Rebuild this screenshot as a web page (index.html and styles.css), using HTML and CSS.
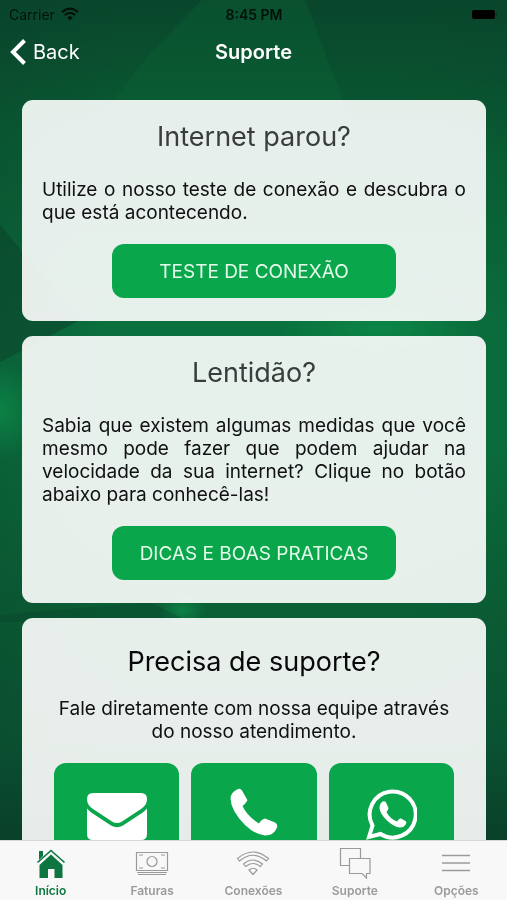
FILE: index.html
```html
<!DOCTYPE html>
<html lang="pt-BR">
<head>
<meta charset="utf-8">
<meta name="viewport" content="width=device-width, initial-scale=1">
<title>Suporte</title>
<link rel="stylesheet" href="styles.css">
</head>
<body>
<svg class="backdrop" viewBox="0 0 507 900" preserveAspectRatio="none" aria-hidden="true">
  <defs>
    <linearGradient id="edge" x1="0" x2="1" y1="0" y2="0">
      <stop offset="0" stop-color="#0a432c" stop-opacity=".35"/>
      <stop offset=".25" stop-color="#0a432c" stop-opacity="0"/>
      <stop offset=".8" stop-color="#0a432c" stop-opacity="0"/>
      <stop offset="1" stop-color="#0a432c" stop-opacity=".15"/>
    </linearGradient>
    <linearGradient id="base" x1="0" x2="0" y1="0" y2="1">
      <stop offset="0" stop-color="#09502f"/>
      <stop offset=".12" stop-color="#095c33"/>
      <stop offset=".36" stop-color="#0a713e"/>
      <stop offset=".5" stop-color="#0a713e"/>
      <stop offset=".68" stop-color="#0a5f35"/>
      <stop offset=".82" stop-color="#0a5533"/>
      <stop offset=".93" stop-color="#09402a"/>
    </linearGradient>
    <linearGradient id="facet" x1="0" x2="0" y1="0" y2="1">
      <stop offset="0" stop-color="#09402a" stop-opacity=".6"/>
      <stop offset="1" stop-color="#09402a" stop-opacity="0"/>
    </linearGradient>
    <radialGradient id="glow">
      <stop offset="0" stop-color="#0c8a49" stop-opacity=".8"/>
      <stop offset="1" stop-color="#0c8a49" stop-opacity="0"/>
    </radialGradient>
  </defs>
  <rect width="507" height="900" fill="url(#base)"/>
  <rect width="507" height="900" fill="url(#edge)"/>
  <path d="M0 0H202L150 54L90 130H0Z" fill="url(#facet)"/>
  <path d="M305 0H507V160H365Z" fill="url(#facet)"/>
  <path d="M0 225L80 320L0 362Z" fill="#09402a" opacity=".5"/>
  <ellipse cx="380" cy="328" rx="100" ry="30" fill="url(#glow)"/>
  <ellipse cx="0" cy="410" rx="40" ry="50" fill="url(#glow)"/>
  <ellipse cx="182" cy="610" rx="24" ry="16" fill="url(#glow)"/>
  <path d="M0 615L150 602L190 622H0Z" fill="#09402a" opacity=".3"/>
</svg>
<header class="top">
  <div class="status">
    <span class="carrier">Carrier
      <svg width="18" height="14" viewBox="0 0 18 14" aria-hidden="true"><g fill="none" stroke="#000" stroke-width="2.3"><path d="M1 5.2Q9-2 17 5.2"/><path d="M3.8 8.2Q9 3.6 14.2 8.2"/></g><path d="M6.2 10.4Q9 8 11.8 10.4L9 13.4Z"/></svg>
    </span>
    <span class="clock">8:45 PM</span>
    <svg class="battery" width="28" height="11" viewBox="0 0 28 11" aria-hidden="true"><rect x="1" y="1" width="23" height="9" rx="2"/><path d="M25.500 3.500q1.500 2 0 4z" opacity=".5"/></svg>
  </div>
  <nav class="navbar">
    <a class="back" href="#"><svg width="17" height="26" viewBox="0 0 17 26" aria-hidden="true"><path d="M14.500 1.500L3 13L14.500 24.500" fill="none" stroke="#fff" stroke-width="4"/></svg>Back</a>
    <h1>Suporte</h1>
  </nav>
</header>
<main>
  <section class="card">
    <h2>Internet parou?</h2>
    <p>Utilize o nosso teste de conexão e descubra o que está acontecendo.</p>
    <button class="action" type="button">TESTE DE CONEXÃO</button>
  </section>
  <section class="card">
    <h2>Lentidão?</h2>
    <p>Sabia que existem algumas medidas que você mesmo pode fazer que podem ajudar na velocidade da sua internet? Clique no botão abaixo para conhecê-las!</p>
    <button class="action" type="button">DICAS E BOAS PRATICAS</button>
  </section>
  <section class="card contact">
    <h2>Precisa de suporte?</h2>
    <p>Fale diretamente com nossa equipe através do nosso atendimento.</p>
    <div class="tiles">
      <button type="button" aria-label="E-mail"><svg width="60" height="52" viewBox="0 -5 60 52" aria-hidden="true"><g fill="#fff"><path d="M6 0H54Q60 0 60 6Q60 12 54 16L35 28.500Q30 31.500 25 28.500L6 16Q0 12 0 6Q0 0 6 0Z"/><path d="M0 15.500Q2 18 5 20L24 32.500Q30 36 36 32.500L55 20Q58 18 60 15.500V41Q60 47 54 47H6Q0 47 0 41Z"/></g></svg></button>
      <button type="button" aria-label="Telefone"><svg width="48" height="48" viewBox="0 0 48 48" aria-hidden="true"><path fill="#fff" d="M7.500 1.200Q10.500 0 12 2.500L17.500 12.300Q15.500 16 12.500 18Q17 28 29 35.500Q31 31.500 35 30.500L45 34.500Q48 36 47 39.500Q44 47.500 35 47.500Q25 46.500 15 37Q1 23 .5 10.500Q1 4 7.500 1.200Z"/></svg></button>
      <button type="button" aria-label="WhatsApp"><svg width="52" height="52" viewBox="0 0 52 52" aria-hidden="true"><path d="M4 49L7.500 37.500A23 23 0 1 1 15.500 46Z" fill="none" stroke="#fff" stroke-width="4"/><path fill="#fff" d="M17.500 13.500Q20 12.500 21 14.500L23.500 20Q23 22.500 21.500 24Q24.500 30.500 32 33.500Q33.500 31 35.500 30.300L40.500 33Q42 34 41 36Q38.500 40 34.500 39.500Q28 38.500 21.500 32Q15 25.500 14.500 20Q14.500 15.500 17.500 13.500Z"/></svg></button>
    </div>
  </section>
</main>
<nav class="tabs" aria-label="Principal">
  <a class="active" href="#"><svg width="30" height="32" viewBox="0 0 30 32" aria-hidden="true"><path fill="currentColor" d="M3 4H7V9L3 13ZM15 7.500L26.500 18V31H18.500V22H12V31H3.500V18Z"/><path fill="none" stroke="currentColor" stroke-width="1.600" d="M1.500 15.500L15 3.500L28.500 15.500"/></svg>Início</a>
  <a href="#"><svg width="34" height="32" viewBox="0 0 34 32" aria-hidden="true"><g fill="none" stroke="currentColor" stroke-width="1.200"><path d="M1.500 5.500H32.500V23.500H1.500ZM2 25.500H32M3 27.500H31"/><circle cx="17" cy="14.500" r="5"/><path d="M4 8H8M26 8H30M4 21H8M26 21H30"/></g></svg>Faturas</a>
  <a href="#"><svg width="34" height="32" viewBox="0 0 34 32" aria-hidden="true"><g fill="none" stroke="currentColor" stroke-width="1.200" stroke-linejoin="round"><path d="M1.500 11.500Q17-1.500 32.500 11.500L30.500 14Q17 2.500 3.500 14Z"/><path d="M7.500 17Q17 9 26.500 17L24.500 19.500Q17 13.500 9.500 19.500Z"/><path d="M13 23Q17 19.500 21 23L17 27.500Z"/></g></svg>Conexões</a>
  <a href="#"><svg width="32" height="32" viewBox="0 0 32 32" aria-hidden="true"><path fill="none" stroke="currentColor" stroke-width="1.200" d="M21.500 11V1.500H1.500V18.500H10.500M10.500 11.500H31V26.500H27.500V31L23 26.500H10.500Z"/></svg>Suporte</a>
  <a href="#"><svg width="28" height="32" viewBox="0 0 28 32" aria-hidden="true"><path fill="none" stroke="currentColor" stroke-width="1.300" d="M0 8.500H28M0 16H28M0 23.500H28"/></svg>Opções</a>
</nav>
</body>
</html>
```
FILE: styles.css
```css
* { box-sizing: border-box; }
body {
  margin: 0;
  height: 100vh;
  display: flex;
  flex-direction: column;
  overflow: hidden;
  font-family: Inter, "Liberation Sans", sans-serif;
  color: #111;
  background: #09492f;
}
.backdrop {
  position: fixed;
  inset: 0;
  width: 100%;
  height: 100%;
  z-index: -1;
}
.status, .navbar {
  display: grid;
  grid-template-columns: 1fr auto 1fr;
  align-items: center;
}
.status {
  height: 28px;
  padding: 0 8px 0 9px;
  font-size: 14px;
  color: #000;
}
.carrier { display: flex; align-items: center; gap: 6px; opacity: .75; }
.clock { font-weight: 600; opacity: .8; }
.battery { justify-self: end; }
.navbar {
  height: 48px;
  padding: 0 10px;
  color: #fff;
}
.back {
  display: flex;
  align-items: center;
  gap: 6px;
  color: #fff;
  font-size: 20px;
  text-decoration: none;
}
h1 { margin: 0; font-size: 20px; font-weight: 600; }
main {
  flex: 1;
  min-height: 0;
  overflow: hidden;
  padding: 24px 21px 0 22px;
}
.card {
  display: flex;
  flex-direction: column;
  align-items: center;
  margin-bottom: 15px;
  padding: 20px 20px 23px;
  border-radius: 11px;
  background: rgba(255, 255, 255, .9);
}
h2 {
  margin: 0 0 24px;
  font-size: 27px;
  line-height: 34px;
  font-weight: 400;
  color: #3a3d3c;
}
p {
  margin: 0 0 20px;
  width: 100%;
  font-size: 19px;
  line-height: 23px;
  text-align: justify;
}
button {
  border: 0;
  border-radius: 12px;
  background: #0aa64c;
  color: #e4fbea;
  font-family: inherit;
}
.action {
  width: 67%;
  height: 54px;
  padding: 0;
  font-size: 19px;
}
.contact { padding-top: 27px; }
.contact h2 { margin-bottom: 18px; color: #080808; }
.contact p { padding: 0 12px; text-align: center; }
.tiles {
  display: grid;
  grid-template-columns: repeat(3, 1fr);
  gap: 12px;
  width: 100%;
  padding: 0 12px;
}
.tiles button {
  height: 126px;
  padding: 25px 0 0;
  display: flex;
  justify-content: center;
  align-items: flex-start;
}
.tabs {
  flex: none;
  display: grid;
  grid-template-columns: repeat(5, 1fr);
  height: 60px;
  border-top: 1px solid #d4d8d6;
  background: #f8f8f8;
}
.tabs a {
  display: flex;
  flex-direction: column;
  align-items: center;
  gap: 4px;
  padding-top: 6px;
  font-size: 12px;
  line-height: 16px;
  font-weight: 600;
  color: #9a9a9a;
  text-decoration: none;
}
.tabs .active { color: #0c7540; }
```
